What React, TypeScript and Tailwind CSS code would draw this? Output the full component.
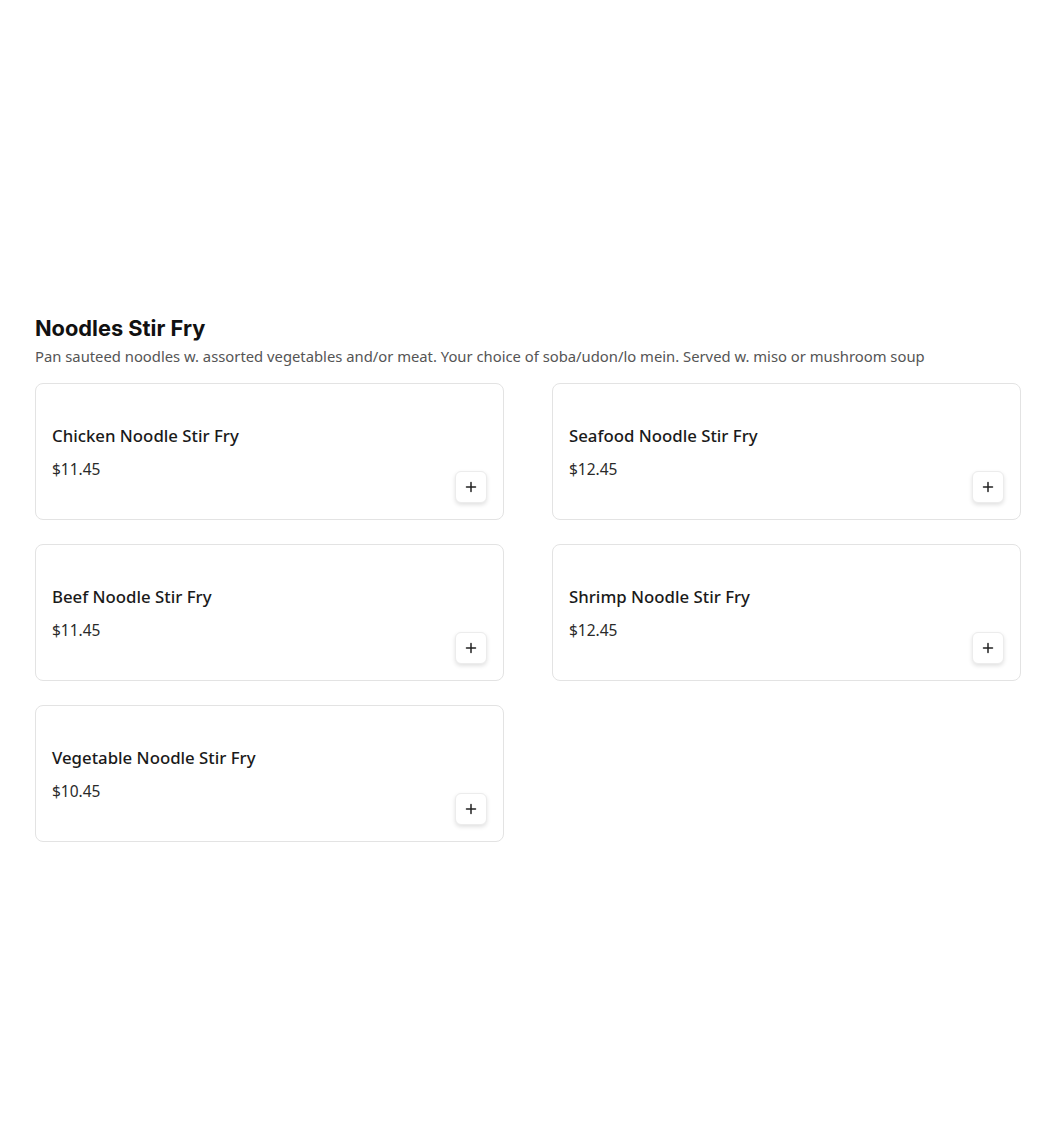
import React from "react";

const items = [
  { name: "Chicken Noodle Stir Fry", price: "$11.45" },
  { name: "Seafood Noodle Stir Fry", price: "$12.45" },
  { name: "Beef Noodle Stir Fry", price: "$11.45" },
  { name: "Shrimp Noodle Stir Fry", price: "$12.45" },
  { name: "Vegetable Noodle Stir Fry", price: "$10.45" },
];

function Card({ name, price }: { name: string; price: string }) {
  return (
    <div className="h-[137px] rounded-lg border border-[#e3e3e3] bg-white pl-4 pr-4 pt-[40px] pb-4 flex flex-col">
      <div className="text-[16.8px] leading-6 font-medium text-[#1a1a1a]">{name}</div>
      <div className="mt-[9px] text-[15.5px] leading-6 text-[#2a2a2a]">{price}</div>
      <div className="flex justify-end -mt-[10px]">
        <button className="w-8 h-8 rounded-md border border-[#ececec] bg-white shadow-[0_2px_4px_rgba(0,0,0,0.12)] flex items-center justify-center">
          <svg width="12" height="12" viewBox="0 0 12 12">
            <path d="M6 1.5v9M1.5 6h9" stroke="#222" strokeWidth="1.5" strokeLinecap="round" />
          </svg>
        </button>
      </div>
    </div>
  );
}

export default function App() {
  return (
    <div className="min-h-[1133px] bg-white px-[35px] pt-[312px]" style={{ fontFamily: "'Noto Sans', sans-serif" }}>
      <h2 className="text-[21.8px] leading-8 font-bold text-[#111]" style={{ fontFamily: "Inter, sans-serif" }}>Noodles Stir Fry</h2>
      <p className="text-[14.8px] leading-6 text-[#555]">
        Pan sauteed noodles w. assorted vegetables and/or meat. Your choice of soba/udon/lo mein. Served w. miso or mushroom soup
      </p>
      <div className="mt-[15px] grid grid-cols-2 gap-x-[48px] gap-y-[24px] w-[986px]">
        {items.map((it) => (
          <Card key={it.name} {...it} />
        ))}
      </div>
    </div>
  );
}
